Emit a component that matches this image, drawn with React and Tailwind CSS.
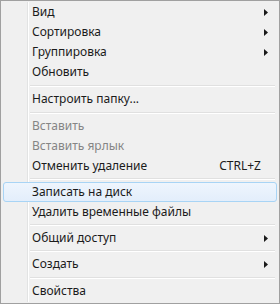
const items = [
  { label: "Вид", arrow: true },
  { label: "Сортировка", arrow: true },
  { label: "Группировка", arrow: true },
  { label: "Обновить" },
  { sep: "h-[7px]" },
  { label: "Настроить папку..." },
  { sep: "h-[7px]" },
  { label: "Вставить", disabled: true },
  { label: "Вставить ярлык", disabled: true },
  { label: "Отменить удаление", shortcut: "CTRL+Z" },
  { sep: "h-[6px]" },
  { label: "Записать на диск", active: true },
  { label: "Удалить временные файлы" },
  { sep: "h-[6px]" },
  { label: "Общий доступ", arrow: true },
  { sep: "h-[6px]" },
  { label: "Создать", arrow: true },
  { sep: "h-[7px]" },
  { label: "Свойства" },
];

const Arrow = () => (
  <svg width="4" height="7" viewBox="0 0 4 7" className="absolute right-[9px] top-[7px]">
    <path d="M0 0 L4 3.5 L0 7 Z" fill="#1a1a1a" />
  </svg>
);

const MenuRow = ({ item }) => {
  if (item.sep) {
    return (
      <div className={`${item.sep} flex items-center pl-[27px] pr-[2px]`}>
        <div className="w-full border-t border-[#e0e0e0] border-b border-b-white" />
      </div>
    );
  }

  return (
    <div
      className={`relative h-[20px] flex items-center pr-[14px] ${
        item.active
          ? "pl-[28px] rounded-[3px] border border-[#a8d4f5] bg-gradient-to-b from-[#eef5fd] to-[#e3eefb]"
          : "pl-[29px]"
      }`}
    >
      <span
        className={`flex-1 text-[12px] leading-none ${
          item.disabled ? "text-[#858585]" : "text-[#1b1b1b]"
        }`}
      >
        {item.label}
      </span>
      {item.shortcut && (
        <span className="text-[12px] leading-none text-[#1b1b1b] mr-[2px]">{item.shortcut}</span>
      )}
      {item.arrow && <Arrow />}
    </div>
  );
};

export default function App() {
  return (
    <div
      className="w-[280px] h-[304px] bg-[#f0f0f0] border border-[#a0a0a0] pt-[1px] px-[2px] overflow-hidden"
      style={{ fontFamily: '"Noto Sans", "Open Sans", sans-serif' }}
    >
      <div className="relative">
        <div className="absolute left-[24px] top-0 h-[300px] w-[2px] border-l border-[#e2e3e3] border-r border-r-white" />
        {items.map((item, i) => (
          <MenuRow key={i} item={item} />
        ))}
      </div>
    </div>
  );
}
